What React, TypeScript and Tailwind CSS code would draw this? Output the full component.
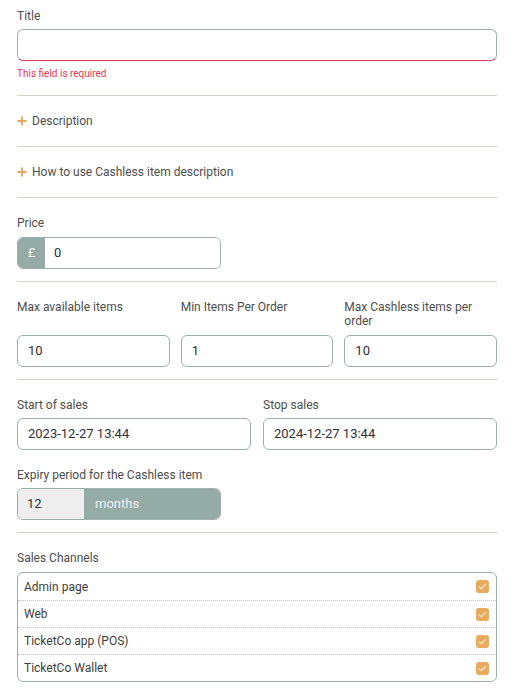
import React from 'react';

const CHANNELS = ['Admin page', 'Web', 'TicketCo app (POS)', 'TicketCo Wallet'];

const Label: React.FC<{ children: React.ReactNode; className?: string }> = ({ children, className = '' }) => (
  <label className={`block text-[12px] leading-[14px] text-[#4d4d4d] ${className}`}>{children}</label>
);

const TextInput: React.FC<{ value: string }> = ({ value }) => (
  <div className="h-[32px] rounded-[6px] border border-[#9bb0ab] bg-white px-[10px] flex items-center text-[13px] text-[#2f2f3a]">
    {value}
  </div>
);

const Divider = () => <div className="h-px bg-[#d6d3cb]" />;

const Plus = () => (
  <svg width="10" height="10" viewBox="0 0 10 10" className="shrink-0">
    <path d="M5 0.5v9M0.5 5h9" stroke="#e8a65a" strokeWidth="1.8" />
  </svg>
);

const Check = () => (
  <span className="w-[13px] h-[13px] rounded-[3px] bg-[#e9aa5e] flex items-center justify-center">
    <svg width="9" height="7" viewBox="0 0 9 7">
      <path d="M1 3.5l2.3 2.2L8 1" stroke="#fbe9d2" strokeWidth="1.1" fill="none" />
    </svg>
  </span>
);

export default function App() {
  return (
    <div className="min-h-[696px] bg-white pl-[17px] pr-[19px] pt-[9px] font-['Roboto',sans-serif]">
      <Label>Title</Label>
      <div className="mt-[6px] h-[32px] rounded-[6px] border border-[#9bb0ab] border-b-[#e0405c] bg-white" />
      <p className="mt-[7px] text-[10px] leading-[12px] text-[#e5364f]">This field is required</p>

      <div className="mt-[15px]"><Divider /></div>
      <button type="button" className="flex items-center gap-[5px] h-[50px] text-[12px] text-[#4d4d4d]">
        <Plus />
        <span>Description</span>
      </button>
      <Divider />
      <button type="button" className="flex items-center gap-[5px] h-[50px] text-[12px] text-[#4d4d4d]">
        <Plus />
        <span>How to use Cashless item description</span>
      </button>
      <Divider />

      <div className="pt-[18px] pb-[12px]">
        <Label>Price</Label>
        <div className="mt-[7px] w-[204px] h-[32px] flex rounded-[6px] border border-[#9bb0ab] overflow-hidden">
          <span className="w-[27px] bg-[#94aba6] text-[#eef3f2] text-[13px] flex items-center justify-center">£</span>
          <span className="flex-1 bg-white px-[9px] flex items-center text-[13px] text-[#2f2f3a]">0</span>
        </div>
      </div>
      <Divider />

      <div className="pt-[18px] pb-[12px] grid grid-cols-3 gap-[11px]">
        <div>
          <Label className="h-[28px]">Max available items</Label>
          <div className="mt-[7px]"><TextInput value="10" /></div>
        </div>
        <div>
          <Label className="h-[28px]">Min Items Per Order</Label>
          <div className="mt-[7px]"><TextInput value="1" /></div>
        </div>
        <div>
          <Label className="h-[28px] pr-[20px]">Max Cashless items per order</Label>
          <div className="mt-[7px]"><TextInput value="10" /></div>
        </div>
      </div>
      <Divider />

      <div className="pt-[18px] grid grid-cols-2 gap-[12px]">
        <div>
          <Label>Start of sales</Label>
          <div className="mt-[6px]"><TextInput value="2023-12-27 13:44" /></div>
        </div>
        <div>
          <Label>Stop sales</Label>
          <div className="mt-[6px]"><TextInput value="2024-12-27 13:44" /></div>
        </div>
      </div>

      <div className="pt-[18px] pb-[12px]">
        <Label>Expiry period for the Cashless item</Label>
        <div className="mt-[6px] w-[204px] h-[32px] flex rounded-[6px] border border-[#9bb0ab] overflow-hidden">
          <span className="w-[66px] bg-[#eeeeee] px-[9px] flex items-center text-[13px] text-[#2f2f3a]">12</span>
          <span className="flex-1 bg-[#94aba6] px-[11px] flex items-center text-[13px] text-[#eef3f2]">months</span>
        </div>
      </div>
      <Divider />

      <div className="pt-[18px]">
        <Label>Sales Channels</Label>
        <div className="mt-[7px] rounded-[6px] border border-[#9bb0ab] overflow-hidden">
          {CHANNELS.map((c, i) => (
            <div
              key={c}
              className={`h-[27px] flex items-center justify-between pl-[6px] pr-[7px] text-[12px] text-[#3d3d3d] ${
                i > 0 ? 'border-t border-dotted border-[#c4c4c4]' : ''
              }`}
            >
              <span>{c}</span>
              <Check />
            </div>
          ))}
        </div>
      </div>
    </div>
  );
}
